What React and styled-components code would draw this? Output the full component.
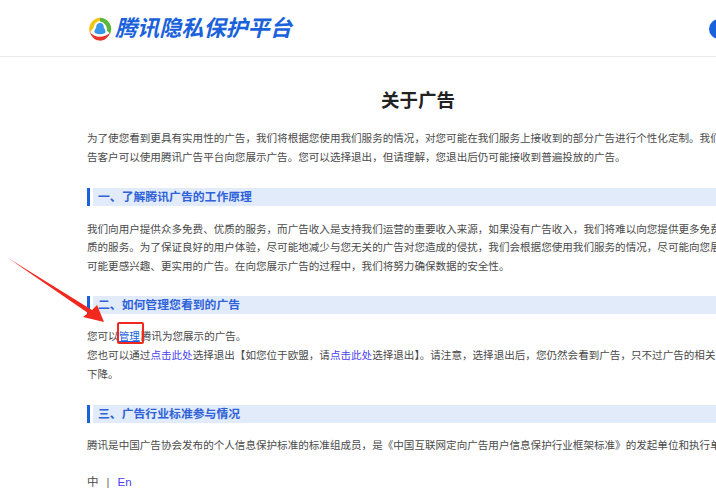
import styled, { createGlobalStyle } from 'styled-components';

const GlobalStyle = createGlobalStyle`
  html, body {
    margin: 0;
    padding: 0;
    background: #fff;
    overflow: hidden;
  }
  body {
    font-family: "Liberation Sans", "Noto Sans CJK SC", sans-serif;
  }
`;

const Page = styled.div`
  position: relative;
  width: 716px;
  height: 499px;
  overflow: hidden;
  background: #fff;
`;

const Header = styled.header`
  display: flex;
  align-items: center;
  justify-content: space-between;
  box-sizing: border-box;
  height: 57px;
  padding: 2px 0 0 87px;
  border-bottom: 1px solid #e9e9e9;
`;

const Brand = styled.div`
  display: flex;
  align-items: center;
  gap: 2px;
`;

const BrandName = styled.span`
  font-size: 22.1px;
  line-height: 28px;
  font-weight: 700;
  font-style: italic;
  color: #1a62dc;
  white-space: nowrap;
`;

const UserDot = styled.div`
  width: 20px;
  height: 20px;
  margin-right: -13px;
  border-radius: 50%;
  background: #1a62dc;
`;

const Content = styled.main`
  width: 662px;
  margin-left: 87px;
`;

const Title = styled.h1`
  margin: 31px 0 0;
  font-size: 18.5px;
  line-height: 26px;
  font-weight: 700;
  text-align: center;
  color: #222;
`;

const Paragraph = styled.div`
  margin-top: ${(p) => p.$top}px;
  font-size: 10.57px;
  line-height: 18.8px;
  color: #4a4a4a;
`;

const Line = styled.div`
  white-space: nowrap;
`;

const SectionTitle = styled.h2`
  display: flex;
  margin: ${(p) => p.$top}px 0 0;
  height: 18px;
  font-size: 11.85px;
  line-height: 18px;
  font-weight: 700;
  color: #2f62d8;
  gap: 3px;
  &::before {
    content: '';
    width: 3px;
    background: #1a62dc;
  }
`;

const SectionLabel = styled.span`
  flex: 1;
  padding-left: 5px;
  background: #e1ebfa;
`;

const TextLink = styled.a`
  color: #4b3ff0;
`;

const ManageLink = styled.a`
  position: relative;
  margin-right: 1px;
  color: #1a62dc;
  text-decoration: underline;
  &::after {
    content: '';
    position: absolute;
    left: -2px;
    right: -4px;
    top: -8px;
    bottom: -2px;
    border: 2px solid #f0281e;
    border-radius: 2px;
  }
`;

const Footer = styled.div`
  display: flex;
  align-items: center;
  gap: 8px;
  margin-top: 18px;
  font-size: 11.5px;
  line-height: 18px;
  color: #4a4a4a;
`;

const FooterDivider = styled.span`
  color: #7a6a5a;
`;

const ArrowMark = styled.svg`
  position: absolute;
  left: 0;
  top: 250px;
`;

function Logo() {
  return (
    <svg width="26" height="26" viewBox="0 0 28 28">
      <path d="M3 18 A12 12 0 0 1 14 2 L14 5 A9 9 0 0 0 7 13 Z" fill="#f5c518" />
      <path d="M14 2 A12 12 0 0 1 25 19 L21.5 16 A9 9 0 0 0 14 6 Z" fill="#59b83a" />
      <path d="M3 17 C8 24 18 24 25 18 C22 25 17 27 13 26.5 C8 26 5 23 3 17 Z" fill="#e8362c" />
      <path d="M14 7.5 C17 7.5 18.5 10 18 12.5 C19.5 14.5 21 17.5 19 18.5 C16 20 12 20 9 18.5 C7 17.5 8.5 14.5 10 12.5 C9.5 10 11 7.5 14 7.5 Z" fill="#3a96e8" />
    </svg>
  );
}

function App() {
  return (
    <Page>
      <GlobalStyle />
      <Header>
        <Brand>
          <Logo />
          <BrandName>腾讯隐私保护平台</BrandName>
        </Brand>
        <UserDot />
      </Header>
      <Content>
        <Title>关于广告</Title>
        <Paragraph $top={15}>
          <Line>为了使您看到更具有实用性的广告&#65292;我们将根据您使用我们服务的情况&#65292;对您可能在我们服务上接收到的部分广告进行个性化定制。我们</Line>
          <Line>告客户可以使用腾讯广告平台向您展示广告。您可以选择退出&#65292;但请理解&#65292;您退出后仍可能接收到普遍投放的广告。</Line>
        </Paragraph>
        <SectionTitle $top={21}><SectionLabel>一、了解腾讯广告的工作原理</SectionLabel></SectionTitle>
        <Paragraph $top={14}>
          <Line>我们向用户提供众多免费、优质的服务&#65292;而广告收入是支持我们运营的重要收入来源&#65292;如果没有广告收入&#65292;我们将难以向您提供更多免费</Line>
          <Line>质的服务。为了保证良好的用户体验&#65292;尽可能地减少与您无关的广告对您造成的侵扰&#65292;我们会根据您使用我们服务的情况&#65292;尽可能向您展</Line>
          <Line>可能更感兴趣、更实用的广告。在向您展示广告的过程中&#65292;我们将努力确保数据的安全性。</Line>
        </Paragraph>
        <SectionTitle $top={20}><SectionLabel>二、如何管理您看到的广告</SectionLabel></SectionTitle>
        <Paragraph $top={13}>
          <Line>您可以<ManageLink>管理</ManageLink>腾讯为您展示的广告。</Line>
          <Line>您也可以通过<TextLink>点击此处</TextLink>选择退出【如您位于欧盟&#65292;请<TextLink>点击此处</TextLink>选择退出】。请注意&#65292;选择退出后&#65292;您仍然会看到广告&#65292;只不过广告的相关</Line>
          <Line>下降。</Line>
        </Paragraph>
        <SectionTitle $top={22}><SectionLabel>三、广告行业标准参与情况</SectionLabel></SectionTitle>
        <Paragraph $top={13}>
          <Line>腾讯是中国广告协会发布的个人信息保护标准的标准组成员&#65292;是《中国互联网定向广告用户信息保护行业框架标准》的发起单位和执行单</Line>
        </Paragraph>
        <Footer>
          <span>中</span>
          <FooterDivider>|</FooterDivider>
          <TextLink>En</TextLink>
        </Footer>
      </Content>
      <ArrowMark width="110" height="80" viewBox="0 0 110 80">
        <path d="M8 8 L92 60 L97 55 L104 72 L83 67 L88 63 Z" fill="#f0281e" />
      </ArrowMark>
    </Page>
  );
}

export default App;
